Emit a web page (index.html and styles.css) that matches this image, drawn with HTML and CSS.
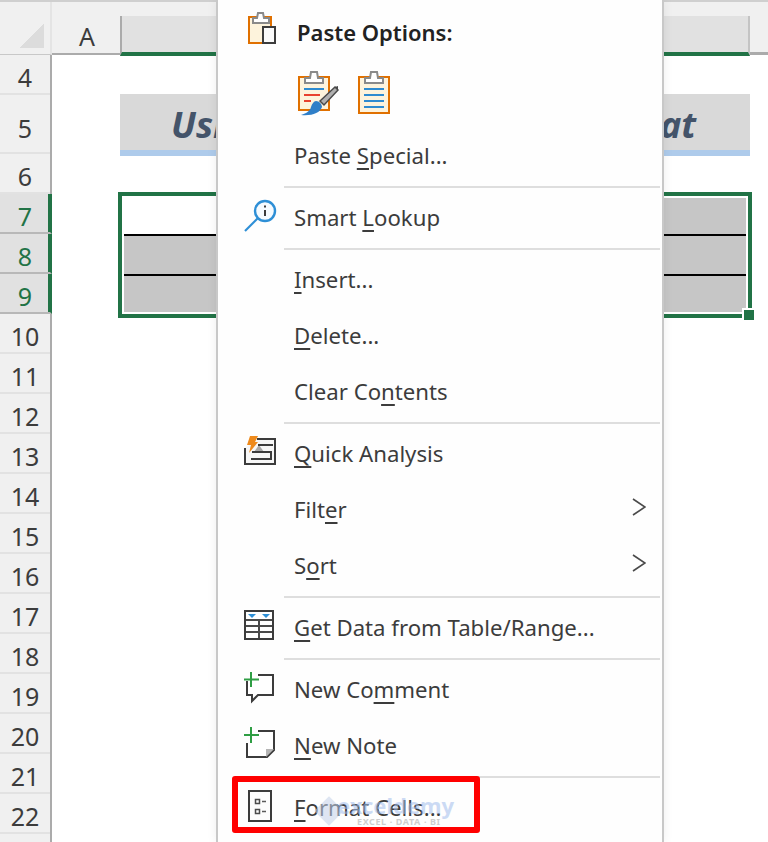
FILE: index.html
```html
<!DOCTYPE html>
<html lang="en">
<head>
<meta charset="utf-8">
<title>Format Cells context menu</title>
<link rel="stylesheet" href="styles.css">
</head>
<body>
<div class="sheet">
  <div class="col-head">
    <div class="corner"><div class="corner-tri"></div></div>
    <div class="col-a">A</div>
    <div class="col-b"></div>
    <div class="col-rest"></div>
  </div>
  <div class="body">
    <div class="row-heads">
      <div class="rh">4</div>
      <div class="rh rh-tall">5</div>
      <div class="rh">6</div>
      <div class="rh sel">7</div>
      <div class="rh sel">8</div>
      <div class="rh sel">9</div>
      <div class="rh">10</div>
      <div class="rh">11</div>
      <div class="rh">12</div>
      <div class="rh">13</div>
      <div class="rh">14</div>
      <div class="rh">15</div>
      <div class="rh">16</div>
      <div class="rh">17</div>
      <div class="rh">18</div>
      <div class="rh">19</div>
      <div class="rh">20</div>
      <div class="rh">21</div>
      <div class="rh">22</div>
    </div>
    <div class="cells">
      <div class="band"><span>Using</span><span>Format</span></div>
      <div class="selection">
        <div class="sel-row sel-row-first"><div class="cell-white"></div><div class="cell-gray"></div></div>
        <div class="sel-line"></div>
        <div class="sel-row sel-row-mid"></div>
        <div class="sel-line"></div>
        <div class="sel-row sel-row-last"></div>
        <div class="handle"></div>
      </div>
    </div>
  </div>

  <div class="menu">
    <div class="item item-bold">
      <svg class="ic ic-up" viewBox="244 11 34 34">
        <path d="M249 17h22v26h-22z" fill="#fdf3dc" stroke="#e07000" stroke-width="2"/>
        <path d="M253 23v-5h4l1-5h5l1 5h5v5z" fill="#fff" stroke="#8a8a8a" stroke-width="2"/>
        <path d="M263 27h12v16h-12z" fill="#fafafa" stroke="#3c3c3c" stroke-width="2"/>
      </svg>
      <span class="label">Paste Options:</span>
    </div>
    <div class="paste-row">
      <svg class="paste-brush" viewBox="296 68 46 50">
        <path d="M299 77h30v33h-30z" fill="#fdf3dc" stroke="#e07000" stroke-width="2"/>
        <path d="M305 83v-5h5l1-6h6l1 6h5v5z" fill="#fff" stroke="#8a8a8a" stroke-width="2"/>
        <path d="M304 89h20" stroke="#2e8bd0" stroke-width="2"/>
        <path d="M304 95h16M304 101h7" stroke="#e8412f" stroke-width="2"/>
        <path d="M320 101l15-14 3 3-14 15z" fill="#b0b0b0" stroke="#4a4a4a" stroke-width="1.500"/>
        <path d="M335 87l3-1v4z" fill="#4a4a4a"/>
        <path d="M316 101c3 0 6 3 6 6-2 6-10 9-21 8 6-2 9-4 10-8 1-3 3-6 5-6z" fill="#2f7fc8"/>
      </svg>
      <svg class="paste-plain" viewBox="356 68 36 48">
        <path d="M359 77h30v36h-30z" fill="#fdf3dc" stroke="#e07000" stroke-width="2"/>
        <path d="M365 83v-5h5l1-6h6l1 6h5v5z" fill="#fff" stroke="#8a8a8a" stroke-width="2"/>
        <path d="M364 89h20M364 95h20M364 101h20M364 107h20" stroke="#2e8bd0" stroke-width="2"/>
      </svg>
    </div>
    <div class="item"><span class="label">Paste <u>S</u>pecial...</span></div>
    <div class="sep"></div>
    <div class="item">
      <svg class="ic" viewBox="244 201 34 34">
        <circle cx="265" cy="211" r="10" fill="#f6fbff" stroke="#2e8fd6" stroke-width="2.400"/>
        <path d="M258 218l-13 13" stroke="#2e8fd6" stroke-width="2.200"/>
        <path d="M265 210v6M265 205.500v2" stroke="#3c3c3c" stroke-width="2"/>
      </svg>
      <span class="label">Smart <u>L</u>ookup</span>
    </div>
    <div class="sep"></div>
    <div class="item"><span class="label"><u>I</u>nsert...</span></div>
    <div class="item"><span class="label"><u>D</u>elete...</span></div>
    <div class="item"><span class="label">Clear Co<u>n</u>tents</span></div>
    <div class="sep"></div>
    <div class="item">
      <svg class="ic" viewBox="244 437 34 34">
        <path d="M245 448v16h30v-25h-18" fill="#f7f7f7" stroke="#3c3c3c" stroke-width="2"/>
        <path d="M254 452l5-7 5 7z" fill="#a8a8a8"/>
        <path d="M251 459h20v-7h-19M258 445h15" fill="none" stroke="#3c3c3c" stroke-width="2"/>
        <path d="M250 436h8l-3 6h3l-9 11 2-8h-4z" fill="#ee8a1c"/>
      </svg>
      <span class="label"><u>Q</u>uick Analysis</span>
    </div>
    <div class="item"><span class="label">Filt<u>e</u>r</span>
      <svg class="chev" viewBox="0 0 14 18"><path d="M1 1l12 8-12 8" fill="none" stroke="#4a4a4a" stroke-width="1.600"/></svg>
    </div>
    <div class="item"><span class="label">S<u>o</u>rt</span>
      <svg class="chev" viewBox="0 0 14 18"><path d="M1 1l12 8-12 8" fill="none" stroke="#4a4a4a" stroke-width="1.600"/></svg>
    </div>
    <div class="sep"></div>
    <div class="item">
      <svg class="ic" viewBox="244 611 34 34">
        <path d="M245 611h28v28h-28z" fill="#fff" stroke="#3c3c3c" stroke-width="2"/>
        <path d="M246 620h26M246 626h26M246 632h26M259 620v18" stroke="#4a4a4a" stroke-width="2"/>
        <path d="M248 614h8l-4 4zM262 614h8l-4 4z" fill="#2e8fd6"/>
      </svg>
      <span class="label"><u>G</u>et Data from Table/Range...</span>
    </div>
    <div class="sep"></div>
    <div class="item">
      <svg class="ic" viewBox="244 673 34 34">
        <path d="M247 681v14h5v6l6-6h15v-20h-15" fill="#fff" stroke="#3c3c3c" stroke-width="2"/>
        <path d="M251 672v15M244 679.500h15" stroke="#2f9e44" stroke-width="2"/>
      </svg>
      <span class="label">New Co<u>m</u>ment</span>
    </div>
    <div class="item">
      <svg class="ic" viewBox="244 729 34 34">
        <path d="M247 743v14h20l7-7v-19h-16" fill="#fff" stroke="#3c3c3c" stroke-width="2"/>
        <path d="M266 757v-8h8z" fill="#b5b5b5"/>
        <path d="M251 727v16M244 735h15" stroke="#2f9e44" stroke-width="2"/>
      </svg>
      <span class="label"><u>N</u>ew Note</span>
    </div>
    <div class="sep"></div>
    <div class="item item-last">
      <svg class="ic" viewBox="244 791 34 34">
        <path d="M249 791h22v30h-22z" fill="#fcfcfc" stroke="#3c3c3c" stroke-width="2"/>
        <path d="M255.500 799.500h4v4h-4zM255.500 809.500h4v4h-4z" fill="none" stroke="#4a4a4a" stroke-width="1.500"/>
        <path d="M262 801.500h4M262 811.500h4" stroke="#5a5a5a" stroke-width="1.500"/>
      </svg>
      <span class="label"><u>F</u>ormat Cells...</span>
      <div class="watermark">
        <div class="wm-diamond"></div>
        <div class="wm-name">exceldemy</div>
        <div class="wm-tag">EXCEL · DATA · BI</div>
      </div>
      <div class="redbox"></div>
    </div>
  </div>
</div>
</body>
</html>
```
FILE: styles.css
```css
* { box-sizing: border-box; }
html, body { margin: 0; padding: 0; background: #fff; }
.sheet {
  position: relative;
  display: flex;
  flex-direction: column;
  width: 768px;
  height: 842px;
  overflow: hidden;
  font-family: "Noto Sans", sans-serif;
  color: #3c3c3c;
}
.col-head {
  display: flex;
  flex: none;
  height: 55px;
  background: #f0f0f0;
  border-top: 2px solid #cfcfcf;
}
.corner {
  position: relative;
  width: 52px;
  border-right: 2px solid #e4e4e4;
  border-bottom: 1px solid #c8c8c8;
}
.corner-tri {
  position: absolute;
  right: 6px;
  bottom: 6px;
  width: 24px;
  height: 24px;
  background: linear-gradient(135deg, transparent 50%, #dcdcdc 50%);
}
.col-a {
  width: 68px;
  border-bottom: 2px solid #ababab;
  font-size: 25px;
  text-align: center;
  line-height: 24px;
  padding: 22px 0 0 2px;
}
.col-b {
  width: 630px;
  margin-top: 14px;
  background: #e1e1e1;
  border-left: 2px solid #ababab;
  border-right: 2px solid #c4c4c4;
  border-bottom: 4px solid #217346;
  margin-bottom: -1px;
}
.col-rest {
  flex: 1;
  border-bottom: 3px solid #ababab;
}
.body { display: flex; flex: 1; }
.row-heads {
  width: 52px;
  flex: none;
  background: #f0f0f0;
  border-right: 2px solid #ababab;
}
.rh {
  height: 40px;
  line-height: 44px;
  font-size: 25px;
  text-align: center;
  border-bottom: 2px solid #e2e2e2;
}
.rh-tall { height: 59px; line-height: 66px; }
.rh.sel {
  background: #e1e1e1;
  color: #217346;
  border-bottom-color: #b8b8b8;
  box-shadow: inset -2px 0 0 #217346;
  margin-right: -2px;
  border-right: 2px solid #217346;
}
.cells { flex: 1; display: flex; flex-direction: column; }
.band {
  display: flex;
  justify-content: space-between;
  height: 62px;
  margin: 39px 0 0 68px;
  width: 630px;
  padding: 7px 54px 0 51px;
  background: #d9d9d9;
  border-bottom: 6px solid #aecbeb;
  font-size: 36px;
  line-height: 48px;
  font-weight: 700;
  font-style: italic;
  color: #44546a;
}
.selection {
  position: relative;
  display: flex;
  flex-direction: column;
  margin: 36px 0 0 66px;
  width: 634px;
  height: 126px;
  border: 4px solid #217346;
  padding: 2px;
  background: #fff;
}
.sel-row { background: #c6c6c6; }
.sel-row-first { height: 36px; display: flex; }
.sel-row-mid { height: 38px; }
.sel-row-last { height: 36px; }
.cell-white { width: 300px; background: #fff; }
.cell-gray { flex: 1; }
.sel-line { height: 2px; background: #000; }
.handle {
  position: absolute;
  right: -6px;
  bottom: -6px;
  width: 12px;
  height: 12px;
  background: #217346;
  border: 2px solid #fff;
  border-right: none;
  border-bottom: none;
}
.menu {
  position: absolute;
  top: 0;
  left: 216px;
  width: 448px;
  height: 842px;
  padding-top: 5px;
  background: #fefefe;
  border-left: 2px solid #c8c8c8;
  border-right: 2px solid #c8c8c8;
  box-shadow: 0 0 10px rgba(0,0,0,.07);
  display: flex;
  flex-direction: column;
  font-size: 22.2px;
}
.item {
  position: relative;
  display: flex;
  align-items: center;
  height: 56px;
  flex: none;
  padding-left: 76px;
}
.label { white-space: nowrap; margin-bottom: 2px; }
.label u { text-underline-offset: 4px; text-decoration-thickness: 2px; }
.item-bold .label { font-weight: 600; font-size: 22px; padding-left: 3px; color: #222; }
.ic {
  position: absolute;
  left: 26px;
  top: 11px;
  width: 34px;
  height: 34px;
  overflow: visible;
}
.ic-up { top: 6px; }
.chev {
  position: absolute;
  right: 16px;
  top: 16px;
  width: 14px;
  height: 18px;
}
.paste-row {
  display: flex;
  flex: none;
  height: 67px;
  padding: 7px 0 0 78px;
}
.paste-brush { width: 46px; height: 50px; }
.paste-plain { width: 36px; height: 48px; margin-left: 14px; }
.sep {
  flex: none;
  height: 2px;
  margin: 2px 2px 2px 66px;
  background: #dedede;
}
.watermark {
  position: absolute;
  left: 92px;
  top: 8px;
  width: 150px;
  height: 46px;
  opacity: .55;
}
.wm-diamond {
  position: absolute;
  left: 6px;
  top: 10px;
  width: 26px;
  height: 26px;
  transform: rotate(45deg) scale(.8);
  background: #c4d2ea;
}
.wm-name {
  position: absolute;
  left: 27px;
  top: 2px;
  font-size: 22px;
  line-height: 30px;
  font-weight: 700;
  color: #a3bdec;
}
.wm-tag {
  position: absolute;
  left: 47px;
  top: 27px;
  font-size: 9px;
  line-height: 14px;
  letter-spacing: .6px;
  font-weight: 700;
  color: #a8a8a8;
  white-space: nowrap;
}
.redbox {
  position: absolute;
  left: 14px;
  top: -4px;
  width: 248px;
  height: 57px;
  border: 6px solid #f00;
  border-radius: 3px;
}
```
